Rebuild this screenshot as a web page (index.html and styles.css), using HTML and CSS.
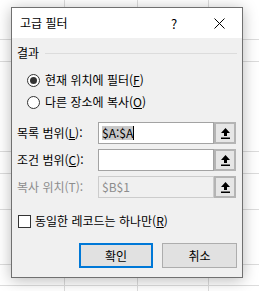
FILE: index.html
```html
<!DOCTYPE html>
<html lang="ko">
<head>
    <meta charset="UTF-8">
    <title>고급 필터</title>
    <link rel="stylesheet" href="styles.css">
</head>
<body>
    <div class="dialog">
        <div class="titlebar">
            <span class="title">고급 필터</span>
            <span class="title-btn help">?</span>
            <span class="title-btn close">
                <svg width="11" height="11" viewBox="0 0 11 11"><path d="M0.5 0.5 L10.5 10.5 M10.5 0.5 L0.5 10.5" stroke="#000" stroke-width="1" fill="none"/></svg>
            </span>
        </div>

        <div class="content">
            <div class="group-head">
                <span>결과</span>
                <span class="rule"></span>
            </div>

            <div class="option-row first">
                <span class="radio checked"></span>
                <span>현재 위치에 필터(<u>F</u>)</span>
            </div>
            <div class="option-row">
                <span class="radio"></span>
                <span>다른 장소에 복사(<u>O</u>)</span>
            </div>

            <div class="fields">
                <div class="field">
                    <span class="field-label">목록 범위(<u>L</u>):</span>
                    <span class="input"><span class="selected">$A:$A</span><span class="caret"></span></span>
                    <span class="picker">
                        <svg width="9" height="11" viewBox="0 0 9 11"><path d="M4.5 0 L9 5 L6 5 L6 8 L3 8 L3 5 L0 5 Z M0 9.5 L9 9.5 L9 11 L0 11 Z" fill="#000"/></svg>
                    </span>
                </div>
                <div class="field">
                    <span class="field-label">조건 범위(<u>C</u>):</span>
                    <span class="input"></span>
                    <span class="picker">
                        <svg width="9" height="11" viewBox="0 0 9 11"><path d="M4.5 0 L9 5 L6 5 L6 8 L3 8 L3 5 L0 5 Z M0 9.5 L9 9.5 L9 11 L0 11 Z" fill="#000"/></svg>
                    </span>
                </div>
                <div class="field disabled">
                    <span class="field-label">복사 위치(T):</span>
                    <span class="input">$B$1</span>
                    <span class="picker">
                        <svg width="9" height="11" viewBox="0 0 9 11"><path d="M4.5 0 L9 5 L6 5 L6 8 L3 8 L3 5 L0 5 Z M0 9.5 L9 9.5 L9 11 L0 11 Z" fill="#000"/></svg>
                    </span>
                </div>
            </div>

            <div class="check-row">
                <span class="checkbox"></span>
                <span>동일한 레코드는 하나만(<u>R</u>)</span>
            </div>

            <div class="actions">
                <button class="btn primary">확인</button>
                <button class="btn">취소</button>
            </div>
        </div>
    </div>
</body>
</html>
```

FILE: styles.css
```css
:root {
    --face: #f0f0f0;
    --grid: #dcdcdc;
    --text: #000;
    --muted: #8d8d8d;
}

* {
    margin: 0;
    padding: 0;
    box-sizing: border-box;
}

body {
    width: 259px;
    height: 291px;
    overflow: hidden;
    padding: 7px 0 0 11px;
    font-family: "Noto Sans CJK KR", "Noto Sans", sans-serif;
    font-size: 12px;
    color: var(--text);
    background-color: #fff;
    background-image:
        linear-gradient(var(--grid), var(--grid)),
        linear-gradient(var(--grid), var(--grid)),
        linear-gradient(var(--grid), var(--grid)),
        linear-gradient(var(--grid), var(--grid)),
        linear-gradient(var(--grid), var(--grid)),
        linear-gradient(var(--grid), var(--grid)),
        linear-gradient(var(--grid), var(--grid)),
        linear-gradient(var(--grid), var(--grid)),
        linear-gradient(var(--grid), var(--grid)),
        linear-gradient(var(--grid), var(--grid));
    background-repeat: no-repeat;
    background-size:
        1px 100%, 1px 100%, 1px 100%,
        100% 1px, 100% 1px, 100% 1px, 100% 1px, 100% 1px, 100% 1px, 100% 1px;
    background-position:
        64px 0, 137px 0, 208px 0,
        0 39px, 0 61px, 0 151px, 0 173px, 0 209px, 0 264px, 0 285px;
}

.dialog {
    width: 232px;
    height: 271px;
    border: 1px solid #707070;
    background: var(--face);
    box-shadow: 0 2px 14px rgba(0, 0, 0, 0.28);
    display: flex;
    flex-direction: column;
}

.titlebar {
    height: 30px;
    background: #fff;
    display: flex;
    align-items: center;
    padding-left: 8px;
}

.title {
    flex: 1;
    line-height: 16px;
}

.title-btn {
    width: 46px;
    height: 30px;
    display: flex;
    align-items: center;
    justify-content: center;
}

.help {
    font-size: 13px;
    padding-left: 2px;
}

.close svg {
    display: block;
}

.content {
    flex: 1;
    padding: 7px 5px 0 5px;
    display: flex;
    flex-direction: column;
}

.group-head {
    display: flex;
    align-items: center;
    height: 16px;
    line-height: 16px;
}

.rule {
    flex: 1;
    height: 1px;
    background: #dcdcdc;
    margin-left: 6px;
}

.option-row,
.check-row {
    display: flex;
    align-items: center;
    height: 16px;
    line-height: 16px;
    white-space: nowrap;
}

.option-row {
    padding-left: 10px;
    margin-top: 6px;
}

.option-row.first {
    margin-top: 11px;
}

.radio {
    width: 13px;
    height: 13px;
    border: 1px solid #333;
    border-radius: 50%;
    background: #fff;
    margin-right: 5px;
    display: flex;
    align-items: center;
    justify-content: center;
}

.radio.checked::after {
    content: "";
    width: 7px;
    height: 7px;
    border-radius: 50%;
    background: #333;
}

.fields {
    margin-top: 12px;
    display: flex;
    flex-direction: column;
    gap: 5px;
}

.field {
    display: flex;
    align-items: center;
    height: 22px;
}

.field-label {
    width: 81px;
    line-height: 16px;
    white-space: nowrap;
}

.input {
    width: 116px;
    height: 22px;
    border: 1px solid #a3a3a3;
    background: #fff;
    display: flex;
    align-items: center;
    padding-left: 3px;
    line-height: 14px;
}

.selected {
    background: #c8c8c8;
    line-height: 14px;
}

.caret {
    width: 1px;
    height: 14px;
    background: #000;
}

.picker {
    width: 22px;
    height: 22px;
    border: 2px solid #b4b4b4;
    background: #e6e6e6;
    display: flex;
    align-items: center;
    justify-content: center;
}

.picker svg {
    display: block;
}

.field.disabled .field-label,
.field.disabled .input {
    color: var(--muted);
}

.field.disabled .input {
    border-color: #cccccc;
    background: var(--face);
}

.check-row {
    margin-top: 15px;
    padding-left: 1px;
}

.checkbox {
    width: 13px;
    height: 13px;
    border: 1px solid #333;
    background: #fff;
    margin-right: 4px;
}

.actions {
    margin-top: 14px;
    display: flex;
    justify-content: flex-end;
    gap: 9px;
}

.btn {
    width: 75px;
    height: 25px;
    border: 1px solid #adadad;
    background: #e1e1e1;
    font-family: inherit;
    font-size: 12px;
    color: var(--text);
}

.btn.primary {
    width: 74px;
    border: 2px solid #0078d7;
}
```
